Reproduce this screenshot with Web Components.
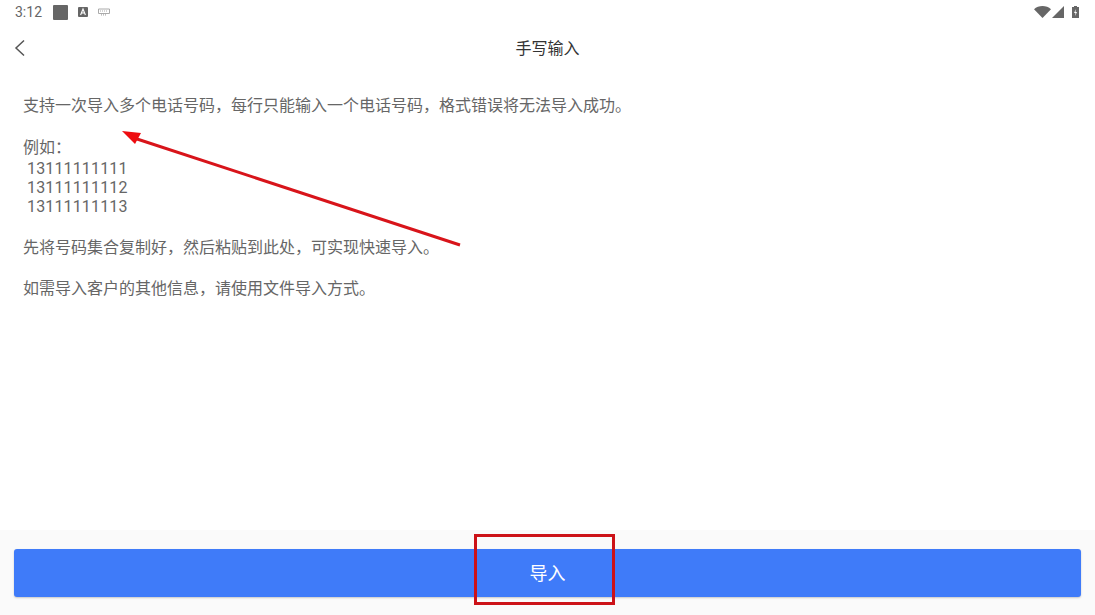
<!DOCTYPE html>
<html lang="zh">
<head>
<meta charset="utf-8">
<title>手写输入</title>
<style>
  html, body { margin: 0; height: 100%; background: #fff; }
  body { font-family: Roboto, "Noto Sans CJK SC", sans-serif; }
  app-screen { height: 615px; }
  help-text p { margin: 0; }
  help-text .example { padding: 1px 0 1.500px; }
  help-text .num { display: block; margin-left: 4px; line-height: 19px; letter-spacing: 0.150px; }
  help-text .num:first-of-type { margin-top: 1.500px; }
</style>
</head>
<body>
<app-screen>
  <status-bar slot="status"></status-bar>
  <nav-bar slot="nav" title="手写输入"></nav-bar>
  <help-text>
    <p>支持一次导入多个电话号码，每行只能输入一个电话号码，格式错误将无法导入成功。</p>
    <p class="example">例如：<span class="num">13111111111</span><span class="num">13111111112</span><span class="num">13111111113</span></p>
    <p>先将号码集合复制好，然后粘贴到此处，可实现快速导入。</p>
    <p>如需导入客户的其他信息，请使用文件导入方式。</p>
  </help-text>
  <import-footer slot="footer" label="导入"></import-footer>
  <red-marks slot="marks"></red-marks>
</app-screen>

<script>
class AppScreen extends HTMLElement {
  constructor() {
    super();
    this.attachShadow({ mode: "open" });
    this.shadowRoot.innerHTML = `
      <style>
        :host {
          display: flex;
          flex-direction: column;
          position: relative;
          overflow: hidden;
          background: #fff;
        }
        main { flex: 1; min-height: 0; }
      </style>
      <slot name="status"></slot>
      <slot name="nav"></slot>
      <main><slot></slot></main>
      <slot name="footer"></slot>
      <slot name="marks"></slot>
    `;
  }
}

class StatusBar extends HTMLElement {
  constructor() {
    super();
    this.attachShadow({ mode: "open" });
    this.shadowRoot.innerHTML = `
      <style>
        :host {
          display: flex;
          align-items: center;
          height: 24px;
          padding: 0 16px 0 15px;
          color: #666;
          font-size: 14px;
        }
        .time { width: 38px; }
        .left { display: flex; align-items: center; gap: 10px; }
        .right { margin-left: auto; display: flex; align-items: center; gap: 1px; }
        svg { display: block; }
      </style>
      <span class="time">3:12</span>
      <div class="left">
        <svg width="15" height="15" viewBox="0 0 15 15"><rect width="15" height="15" rx="1" fill="#666"/></svg>
        <svg width="10" height="10" viewBox="0 0 10 10">
          <rect width="10" height="10" rx="1" fill="#666"/>
          <path d="M2.600 8 5 2l2.400 6M3.600 6h2.800" fill="none" stroke="#fff" stroke-width="1.100"/>
        </svg>
        <svg width="12" height="8" viewBox="0 0 12 8">
          <path d="M.5 1h11v4.500h-11z" fill="none" stroke="#aaa" stroke-width="1"/>
          <path d="M2 3h8M3 6.800h6" stroke="#aaa" stroke-width="1.200" stroke-dasharray="1 1"/>
        </svg>
      </div>
      <div class="right">
        <svg width="17" height="12" viewBox="0 0 17 12"><path d="M0 3.200C4.500-1 12.500-1 17 3.200L8.500 12z" fill="#666"/></svg>
        <svg width="12" height="12" viewBox="0 0 12 12"><path d="M12 0v12H0z" fill="#666"/></svg>
        <svg width="7" height="12" viewBox="0 0 7 12" style="margin-left:7px">
          <path d="M2 0h3v1h2v11H0V1h2z" fill="#666"/>
          <path d="M4 3 2 7h1.500L3 10l2-4H3.500z" fill="#fff"/>
        </svg>
      </div>
    `;
  }
}

class NavBar extends HTMLElement {
  constructor() {
    super();
    this.attachShadow({ mode: "open" });
    this.shadowRoot.innerHTML = `
      <style>
        :host {
          display: grid;
          grid-template-columns: 60px 1fr 60px;
          align-items: center;
          height: 47px;
          color: #333;
          font-size: 16px;
        }
        button { all: unset; padding-left: 14px; display: flex; }
        h1 { margin: 0 0 2px; font: inherit; text-align: center; }
      </style>
      <button aria-label="返回">
        <svg width="12" height="18" viewBox="0 0 12 18"><path d="M10 1.500 2 9l8 7.500" fill="none" stroke="#555" stroke-width="1.500"/></svg>
      </button>
      <h1>${this.getAttribute("title")}</h1>
      <span></span>
    `;
  }
}

class HelpText extends HTMLElement {
  constructor() {
    super();
    this.attachShadow({ mode: "open" });
    this.shadowRoot.innerHTML = `
      <style>
        :host {
          display: flex;
          flex-direction: column;
          gap: 20.300px;
          padding: 25px 23px 0;
          color: #666;
          font-size: 16px;
          line-height: 20.300px;
        }
      </style>
      <slot></slot>
    `;
  }
}

class ImportFooter extends HTMLElement {
  constructor() {
    super();
    this.attachShadow({ mode: "open" });
    this.shadowRoot.innerHTML = `
      <style>
        :host {
          display: block;
          height: 85px;
          box-sizing: border-box;
          padding: 19px 14px 18px;
          background: #fafafa;
        }
        button {
          display: block;
          width: 100%;
          height: 48px;
          padding: 0 0 3px;
          border: 0;
          border-radius: 3px;
          background: #3f7bf9;
          box-shadow: 0 1px 2px rgba(0, 0, 0, 0.2);
          color: #fff;
          font: 18px Roboto, "Noto Sans CJK SC", sans-serif;
        }
      </style>
      <button>${this.getAttribute("label")}</button>
    `;
  }
}

// hand-drawn annotations lying over the screenshot
class RedMarks extends HTMLElement {
  constructor() {
    super();
    this.attachShadow({ mode: "open" });
    this.shadowRoot.innerHTML = `
      <style>
        :host { position: absolute; inset: 0; pointer-events: none; }
        svg { display: block; }
      </style>
      <svg width="1095" height="615" viewBox="0 0 1095 615">
        <path d="M460 245 134 138" stroke="#d8141a" stroke-width="3" fill="none"/>
        <path d="M122 131 141 133 135 144z" fill="#ee0c10"/>
        <rect x="475.500" y="535.500" width="138" height="68" fill="none" stroke="#cc1218" stroke-width="3"/>
      </svg>
    `;
  }
}

customElements.define("app-screen", AppScreen);
customElements.define("status-bar", StatusBar);
customElements.define("nav-bar", NavBar);
customElements.define("help-text", HelpText);
customElements.define("import-footer", ImportFooter);
customElements.define("red-marks", RedMarks);
</script>
</body>
</html>
